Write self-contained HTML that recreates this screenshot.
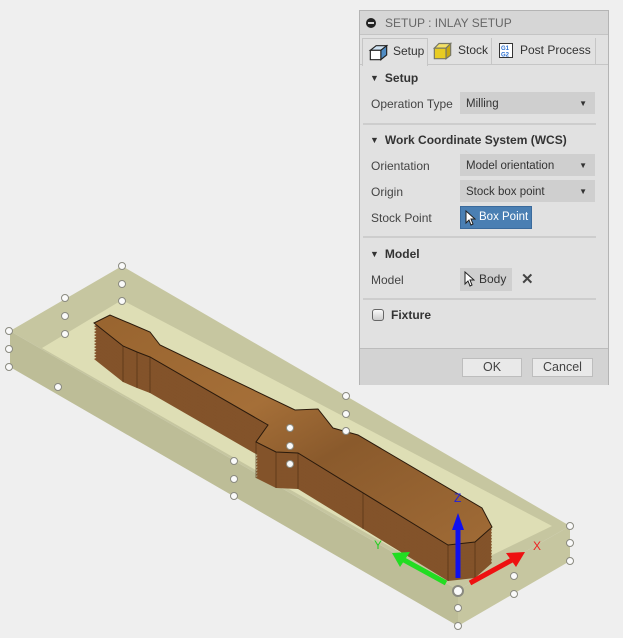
<!DOCTYPE html>
<html><head><meta charset="utf-8"><style>
*{box-sizing:border-box}
body{margin:0;width:623px;height:638px;overflow:hidden;background:#efefef;font-family:"Liberation Sans",sans-serif;font-size:12px;color:#3c3c3c;position:relative}
svg.scene{position:absolute;left:0;top:0}
.dlg{position:absolute;left:359px;top:10px;width:250px;height:375px;background:#e1e1e1;border:1px solid #b4b4b4;white-space:nowrap}
.title{position:absolute;left:0;top:0;width:248px;height:24px;background:#d6d6d6;border-bottom:1px solid #c4c4c4;color:#666;font-size:12px;line-height:24px;padding-left:25px}
.title:before{content:"";position:absolute;left:6px;top:7px;width:10px;height:10px;border-radius:50%;background:#222}
.title:after{content:"";position:absolute;left:8px;top:11px;width:6px;height:2px;background:#d6d6d6}
.tabs{position:absolute;left:0;top:27px;width:248px;height:27px;border-bottom:1px solid #c6c6c6}
.tab{position:absolute;top:0;height:27px;line-height:24px;font-size:12px;color:#333;border-right:1px solid #c6c6c6}
.tab.act{background:#e1e1e1;border:1px solid #c6c6c6;border-bottom:none;height:28px}
.abs{position:absolute}
.hdr{position:absolute;left:10px;font-weight:bold;font-size:12px;color:#333}
.hdr:before{content:"▼";font-size:9px;margin-right:6px;position:relative;top:-1px}
.lbl{position:absolute;left:11px;font-size:12px;color:#444}
.dd{position:absolute;left:100px;width:135px;height:22px;background:#cfcfcf;line-height:24px;padding-left:6px;color:#333;font-size:11.5px}
.dd:after{content:"▼";position:absolute;right:8px;top:0;font-size:8px}
.sep{position:absolute;left:3px;width:233px;height:2px;background:#cdcdcd}
.btn{position:absolute;top:347px;height:19px;background:#e9e9e9;border:1px solid #bdbdbd;text-align:center;line-height:17px;color:#444;font-size:12.5px}
</style></head><body>
<svg class="scene" width="623" height="638" viewBox="0 0 623 638">
<defs>
<linearGradient id="wood" x1="0" y1="0" x2="1" y2="1">
<stop offset="0" stop-color="#98642f"/><stop offset=".4" stop-color="#a56f38"/><stop offset=".6" stop-color="#8a5a2c"/><stop offset="1" stop-color="#a06b36"/></linearGradient>
<polygon id="g" points="94,323 110,315 150,332 160,345 295,410 318,409 333,428 358,435 482,508 492,527 475,542 448,545 298,453 276,452 256,442 268,425 150,357 137,352 123,346"/>
</defs>
<polygon points="10,331 122,266 570,526 458,590" fill="#c6c6a0"/>
<polygon points="122,300 42,348 445,578 552,526" fill="#dedeb5"/>
<polygon points="10,331 10,367 38,349" fill="#b0b09a"/>
<polygon points="570,526 570,561 543,543" fill="#b0b09a"/>
<polygon points="10,331 458,590 458,626 10,367" fill="#bdbd97"/>
<polygon points="458,590 570,526 570,561 458,626" fill="#c6c6a0"/>
<g fill="#83532a">
<use href="#g" y="36"/><use href="#g" y="33"/><use href="#g" y="30"/><use href="#g" y="27"/><use href="#g" y="24"/><use href="#g" y="21"/><use href="#g" y="18"/><use href="#g" y="15"/><use href="#g" y="12"/><use href="#g" y="9"/><use href="#g" y="6"/><use href="#g" y="3"/>
</g>
<g stroke="#4a2c12" stroke-width="1" opacity=".6">
<line x1="123" y1="346" x2="123" y2="382"/><line x1="137" y1="352" x2="137" y2="388"/><line x1="150" y1="357" x2="150" y2="393"/>
<line x1="256" y1="442" x2="256" y2="478"/><line x1="276" y1="452" x2="276" y2="488"/><line x1="298" y1="453" x2="298" y2="489"/>
<line x1="363" y1="493" x2="363" y2="529"/><line x1="448" y1="545" x2="448" y2="581"/><line x1="475" y1="542" x2="475" y2="578"/>
</g>
<use href="#g" fill="url(#wood)" stroke="#2a1a0c" stroke-width="1"/>
<g fill="#fafafa" stroke="#8a8a80" stroke-width="1">
<circle cx="122" cy="266" r="3.5"/><circle cx="122" cy="284" r="3.5"/><circle cx="122" cy="301" r="3.5"/>
<circle cx="65" cy="298" r="3.5"/><circle cx="65" cy="316" r="3.5"/><circle cx="65" cy="334" r="3.5"/>
<circle cx="9" cy="331" r="3.5"/><circle cx="9" cy="349" r="3.5"/><circle cx="9" cy="367" r="3.5"/>
<circle cx="58" cy="387" r="3.5"/>
<circle cx="346" cy="396" r="3.5"/><circle cx="346" cy="414" r="3.5"/><circle cx="346" cy="431" r="3.5"/>
<circle cx="290" cy="428" r="3.5"/><circle cx="290" cy="446" r="3.5"/><circle cx="290" cy="464" r="3.5"/>
<circle cx="234" cy="461" r="3.5"/><circle cx="234" cy="479" r="3.5"/><circle cx="234" cy="496" r="3.5"/>
<circle cx="570" cy="526" r="3.5"/><circle cx="570" cy="543" r="3.5"/><circle cx="570" cy="561" r="3.5"/>
<circle cx="514" cy="576" r="3.5"/><circle cx="514" cy="594" r="3.5"/>
<circle cx="458" cy="608" r="3.5"/><circle cx="458" cy="626" r="3.5"/>
<circle cx="458" cy="591" r="5" stroke-width="2"/>
</g>
<line x1="458" y1="578" x2="458" y2="530" stroke="#1010ee" stroke-width="5"/>
<polygon points="452,530 464,530 458,513" fill="#1010ee"/>
<line x1="446" y1="583" x2="404" y2="560" stroke="#22dd22" stroke-width="5"/>
<polygon points="400,567 410,552 392,553" fill="#22dd22"/>
<line x1="470" y1="583" x2="512" y2="560" stroke="#ee1111" stroke-width="5"/>
<polygon points="506,553 516,567 525,552" fill="#ee1111"/>
<text x="454" y="502" fill="#2222dd" font-size="12" font-family="Liberation Sans">Z</text>
<text x="374" y="549" fill="#22cc22" font-size="12" font-family="Liberation Sans">Y</text>
<text x="533" y="550" fill="#ee2222" font-size="12" font-family="Liberation Sans">X</text>
</svg>

<div class="dlg">
<div class="title">SETUP : INLAY SETUP</div>
<div class="tabs">
<div class="tab act" style="left:2px;width:66px;padding-left:30px">Setup
<svg class="abs" style="left:5px;top:3px" width="21" height="19" viewBox="0 0 18 16"><polygon points="2,7 7,3 16,3 11,7" fill="#cfe3f3" stroke="#222"/><polygon points="11,7 16,3 16,11 11,15" fill="#4f8cc4" stroke="#222"/><polygon points="2,7 11,7 11,15 2,15" fill="#fff" stroke="#222"/></svg></div>
<div class="tab" style="left:68px;width:64px;padding-left:30px">Stock
<svg class="abs" style="left:4px;top:3px" width="21" height="19" viewBox="0 0 18 16"><polygon points="2,6 6,2 16,2 12,6" fill="#f3e066" stroke="#776"/><polygon points="12,6 16,2 16,12 12,15" fill="#c9a90e" stroke="#776"/><polygon points="2,6 12,6 12,15 2,15" fill="#e8cc22" stroke="#776"/></svg></div>
<div class="tab" style="left:132px;width:104px;padding-left:28px">Post Process
<svg class="abs" style="left:7px;top:5px" width="14" height="15" viewBox="0 0 14 15"><rect x=".5" y=".5" width="13" height="14" fill="#fff" stroke="#333"/><text x="2" y="7" font-size="6" fill="#2a6fd0" font-family="Liberation Sans" font-weight="bold">G1</text><text x="2" y="13.5" font-size="6" fill="#2a6fd0" font-family="Liberation Sans" font-weight="bold">G2</text></svg></div>
</div>
<div class="hdr" style="top:60px">Setup</div>
<div class="lbl" style="top:86px">Operation Type</div>
<div class="dd" style="top:81px">Milling</div>
<div class="sep" style="top:112px"></div>
<div class="hdr" style="top:122px">Work Coordinate System (WCS)</div>
<div class="lbl" style="top:148px">Orientation</div>
<div class="dd" style="top:143px">Model orientation</div>
<div class="lbl" style="top:174px">Origin</div>
<div class="dd" style="top:169px">Stock box point</div>
<div class="lbl" style="top:200px">Stock Point</div>
<div class="abs" style="left:100px;top:195px;width:72px;height:23px;background:#4a7fb3;border:1px solid #3a6a9c;color:#fff;line-height:21px;padding-left:18px;font-size:11.5px">Box Point
<svg class="abs" style="left:4px;top:3px" width="11" height="16" viewBox="0 0 11 16"><path d="M1,1 L1,13 L4,10 L6,15 L8,14 L6,9 L10,9 Z" fill="#fff" stroke="#222"/></svg></div>
<div class="sep" style="top:225px"></div>
<div class="hdr" style="top:236px">Model</div>
<div class="lbl" style="top:262px">Model</div>
<div class="abs" style="left:100px;top:257px;width:52px;height:23px;background:#cfcfcf;line-height:22px;padding-left:19px;font-size:12px;color:#333">Body
<svg class="abs" style="left:4px;top:3px" width="11" height="16" viewBox="0 0 11 16"><path d="M1,1 L1,13 L4,10 L6,15 L8,14 L6,9 L10,9 Z" fill="#fff" stroke="#222"/></svg></div>
<div class="abs" style="left:161px;top:259px;font-size:15px;font-weight:bold;color:#444">✕</div>
<div class="sep" style="top:287px"></div>
<div class="abs" style="left:12px;top:298px;width:12px;height:12px;border:1px solid #666;border-radius:3px;background:linear-gradient(#fafafa,#ccc)"></div>
<div class="abs" style="left:31px;top:297px;font-weight:bold;color:#333">Fixture</div>
<div class="abs" style="left:0;top:337px;width:248px;height:37px;background:#d3d3d3;border-top:1px solid #bcbcbc"></div>
<div class="btn" style="left:102px;width:60px">OK</div>
<div class="btn" style="left:172px;width:61px">Cancel</div>
</div>
</body></html>
